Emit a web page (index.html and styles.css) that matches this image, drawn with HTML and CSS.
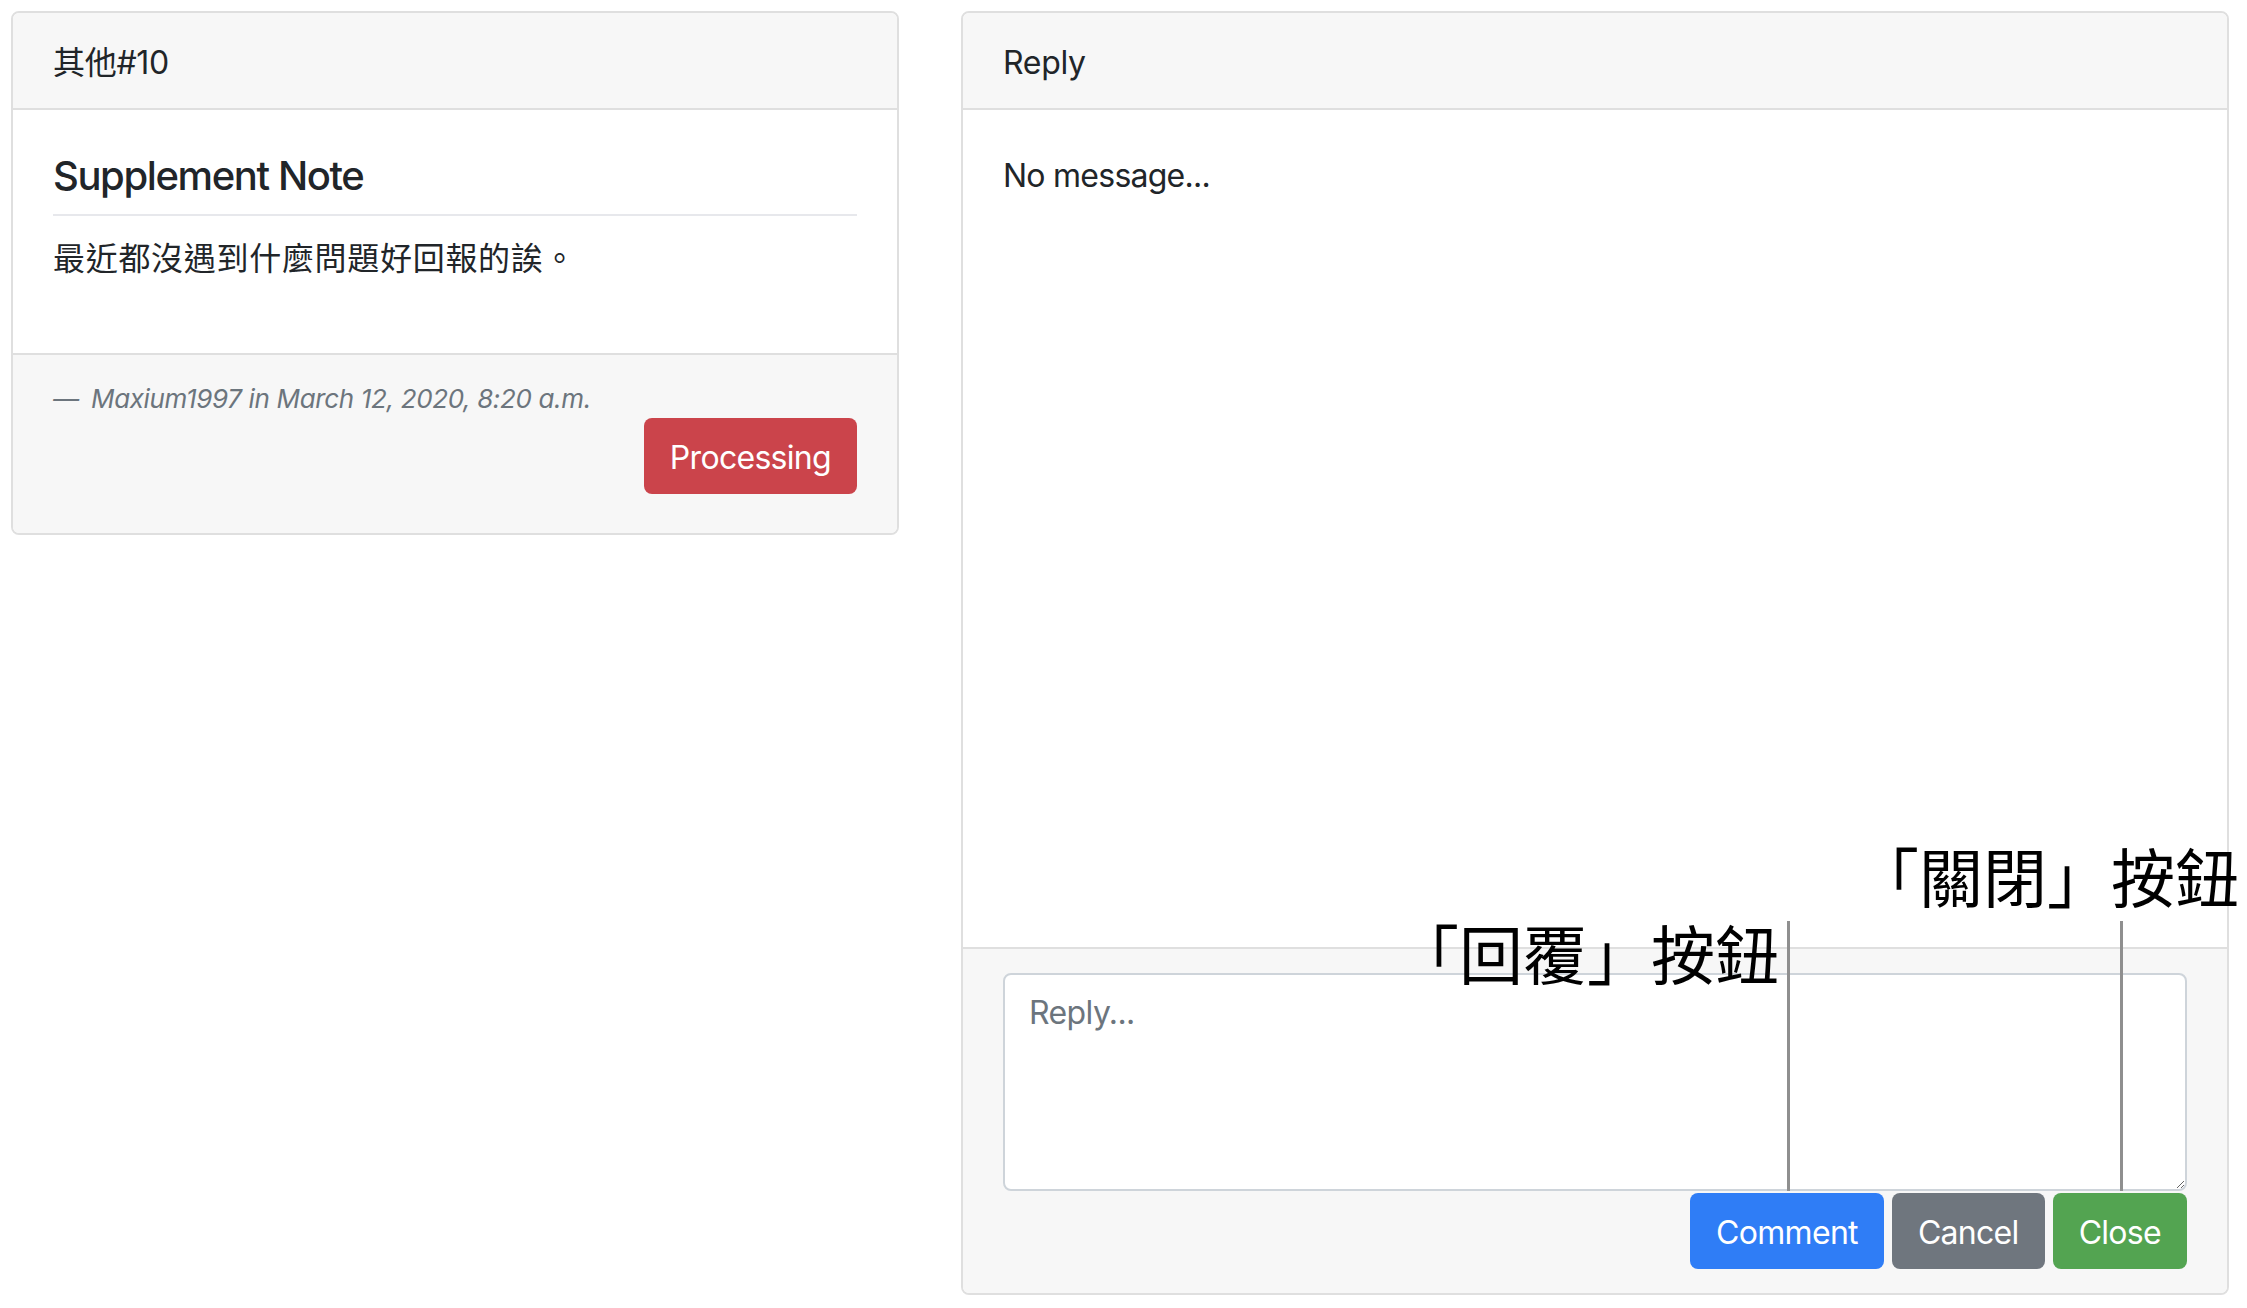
FILE: index.html
```html
<!DOCTYPE html>
<html lang="zh-Hant">
<head>
<meta charset="utf-8">
<title>Supplement Note</title>
<link rel="stylesheet" href="styles.css">
</head>
<body>
<div class="page">
  <section class="card">
    <div class="card-header">其他#10</div>
    <div class="card-body">
      <h5 class="card-title">Supplement Note</h5>
      <hr class="divider">
      <p class="note-text">最近都沒遇到什麼問題好回報的誒。</p>
    </div>
    <div class="card-footer note-footer">
      <div class="meta"><span class="dash">—</span>Maxium1997 in March 12, 2020, 8:20 a.m.</div>
      <div class="status-row"><button class="btn btn-danger">Processing</button></div>
    </div>
  </section>

  <section class="card">
    <div class="card-header">Reply</div>
    <div class="card-body reply-body"><p class="plain">No message...</p></div>
    <div class="card-footer reply-footer">
      <textarea class="reply-input" placeholder="Reply..."></textarea>
      <div class="actions">
        <button class="btn btn-primary">Comment</button>
        <button class="btn btn-secondary">Cancel</button>
        <button class="btn btn-success">Close</button>
      </div>
    </div>
  </section>

  <div class="annot annot-close">「關閉」按鈕</div>
  <div class="annot annot-reply">「回覆」按鈕</div>
  <div class="pointer pointer-reply"></div>
  <div class="pointer pointer-close"></div>
</div>
</body>
</html>
```

FILE: styles.css
```css
html, body {
  margin: 0;
  background: #ffffff;
}
body {
  font-family: "Inter", "Noto Sans CJK TC", sans-serif;
  font-size: 32px;
  line-height: 48px;
  color: #212529;
}
.page {
  position: relative;
  display: grid;
  grid-template-columns: 888px 1268px;
  column-gap: 62px;
  align-items: start;
  padding: 11px 0 0 11px;
}
.card {
  border: 2px solid #dfdfdf;
  border-radius: 8px;
  background: #ffffff;
  overflow: hidden;
}
.card-header {
  background: #f7f7f7;
  padding: 26px 40px 21px;
  border-bottom: 2px solid #dfdfdf;
  letter-spacing: -0.3px;
}
.card-body {
  padding: 40px;
}
.card-title {
  margin: 0 0 14px;
  padding-top: 2px;
  font-size: 40px;
  line-height: 48px;
  font-weight: 500;
  letter-spacing: -1.4px;
}
.divider {
  border: 0;
  border-top: 2px solid #e7e8ec;
  margin: 0 0 16px;
}
.note-text {
  margin: 0 0 30px;
  padding-top: 3px;
  letter-spacing: 0.7px;
}
.card-footer {
  background: #f7f7f7;
  border-top: 2px solid #dfdfdf;
}
.note-footer {
  padding: 24px 40px 39px;
}
.meta {
  font-size: 26px;
  line-height: 38px;
  padding-top: 1px;
  font-style: italic;
  color: #6c757d;
  letter-spacing: -0.35px;
}
.dash {
  display: inline-block;
  margin-right: 12px;
  letter-spacing: 0;
}
.status-row {
  display: flex;
  justify-content: flex-end;
}
.btn {
  font-family: "Inter", sans-serif;
  font-size: 32px;
  line-height: 48px;
  padding: 14px 24px 10px;
  border: 2px solid transparent;
  border-radius: 8px;
  color: #ffffff;
  letter-spacing: -0.7px;
}
.btn-danger { background: #cb444b; }
.btn-primary { background: #2f7df6; }
.btn-secondary { background: #6f767e; }
.btn-success { background: #53a451; }

.reply-body {
  height: 837px;
  box-sizing: border-box;
}
.plain {
  margin: 0;
  padding-top: 2px;
  letter-spacing: -0.75px;
}
.reply-footer {
  padding: 24px 40px 24px;
}
.reply-input {
  display: block;
  width: 100%;
  height: 218px;
  box-sizing: border-box;
  border: 2px solid #ced4da;
  border-radius: 8px;
  padding: 14px 24px 10px;
  font-family: "Inter", sans-serif;
  font-size: 32px;
  line-height: 48px;
  letter-spacing: -0.6px;
  color: #495057;
  background: #ffffff;
  resize: vertical;
  margin: 0;
}
.reply-input::placeholder {
  color: #6c757d;
}
.actions {
  display: flex;
  justify-content: flex-end;
  gap: 8px;
  margin-top: 2px;
}

.annot {
  position: absolute;
  font-family: "Noto Sans CJK TC", sans-serif;
  font-size: 64px;
  line-height: 64px;
  color: #000000;
  white-space: nowrap;
}
.annot-close { left: 1855px; top: 842px; }
.annot-reply { left: 1395px; top: 919px; }
.pointer {
  position: absolute;
  top: 921px;
  width: 3px;
  height: 270px;
  background: #8f8f8f;
}
.pointer-reply { left: 1787px; }
.pointer-close { left: 2120px; }
```
